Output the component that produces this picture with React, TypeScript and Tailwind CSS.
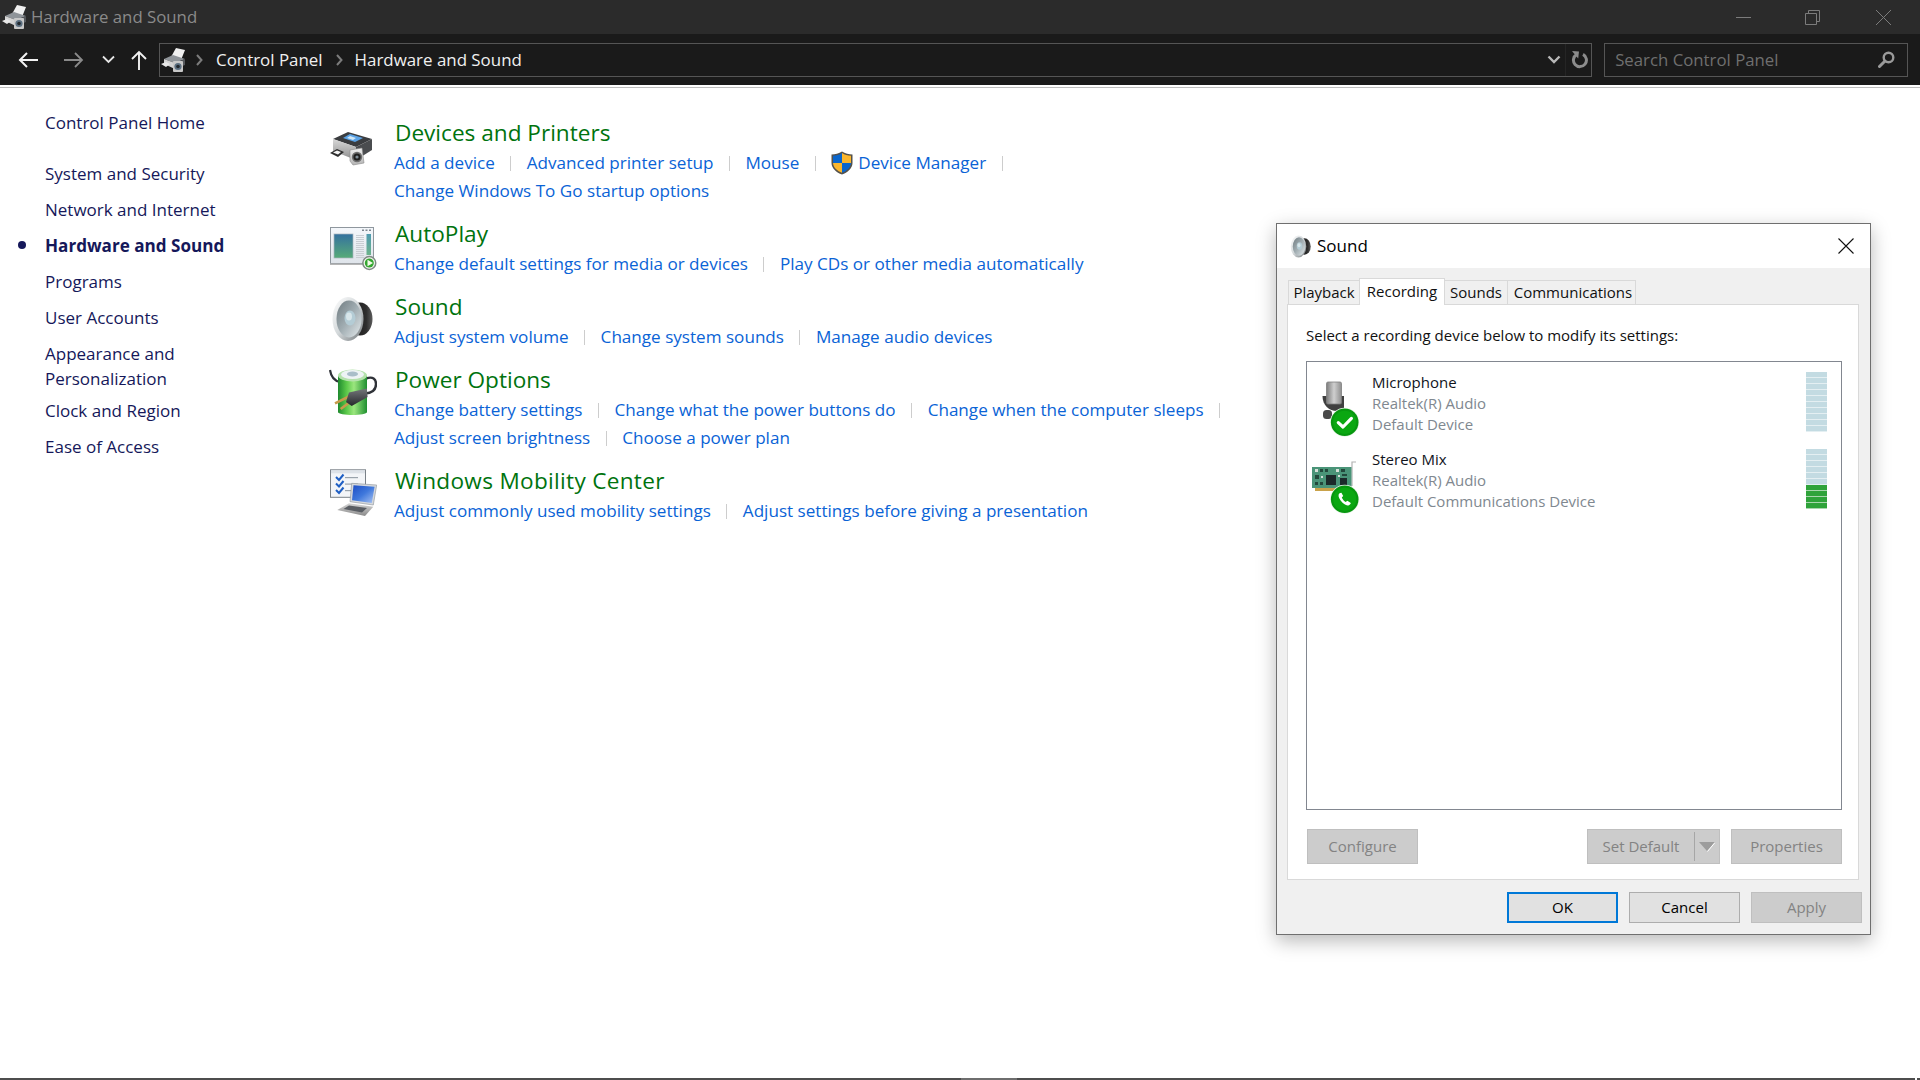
import React from 'react';

const SIDE_ITEMS = ['System and Security', 'Network and Internet', 'Hardware and Sound', 'Programs', 'User Accounts'];

function Grad({ id, stops, x2 = 0, y2 = 1 }: { id: string; stops: [string, string][]; x2?: number; y2?: number }) {
  return (
    <linearGradient id={id} x1="0" y1="0" x2={x2} y2={y2}>
      {stops.map(([o, c]) => (
        <stop key={o} offset={o} stopColor={c} />
      ))}
    </linearGradient>
  );
}

function DevicesIcon() {
  return (
    <svg width="48" height="48" viewBox="0 0 48 48" className="shrink-0 mt-[7px]">
      <defs>
        <Grad id="devFront" stops={[['0', '#d8d8d8'], ['1', '#8d8d8d']]} />
        <Grad id="devCam" stops={[['0', '#f2f2f2'], ['1', '#b4b4b4']]} />
      </defs>
      <polygon points="4,15 19,8 43,15 27,23" fill="#3b3d40" />
      <polygon points="14,14 21,10 34,14 26,18" fill="#5ba3e6" />
      <polygon points="18,14 21,12 27,14 24,16" fill="#cfe6f5" />
      <polygon points="4,15 27,23 27,36 4,27" fill="url(#devFront)" />
      <polygon points="27,23 43,15 43,26 27,36" fill="#4a4c4f" />
      <polygon points="1,29 8,25 15,28 9,33" fill="#2e2e2e" />
      <polygon points="4,28.5 8,26.5 12,28 9,30.5" fill="#f4f4f4" />
      <polygon points="21,26 33,24 35,39 24,41 21,37" fill="url(#devCam)" stroke="#8a8a8a" strokeWidth="0.6" />
      <circle cx="28" cy="33" r="5.2" fill="#6d6d6d" />
      <circle cx="28" cy="33" r="3.6" fill="#1f1f1f" />
      <circle cx="28" cy="33" r="1.6" fill="#7f8d96" />
    </svg>
  );
}

function AutoPlayIcon() {
  return (
    <svg width="48" height="48" viewBox="0 0 48 48" className="shrink-0 mt-[6px]">
      <defs>
        <Grad id="apFrame" stops={[['0', '#f4f7fb'], ['1', '#dfe4ea']]} />
        <Grad id="apPane" stops={[['0', '#34719f'], ['1', '#57ab78']]} />
        <Grad id="apBar" stops={[['0', '#4f9ab0'], ['1', '#6cb38b']]} />
      </defs>
      <rect x="1.5" y="3.5" width="43" height="36" fill="url(#apFrame)" stroke="#8f979e" />
      <rect x="1" y="39.5" width="44" height="1.5" fill="#b5b5b5" />
      <rect x="5" y="10" width="19" height="24" fill="url(#apPane)" stroke="#a9b5bd" strokeWidth="0.7" />
      {[11, 13, 15, 17, 19, 21, 23, 25, 27, 29, 31, 33].map((y) => (
        <rect key={y} x="27" y={y} width="8" height="1" fill="#c9ced3" />
      ))}
      <rect x="37.5" y="10" width="4.5" height="21" fill="url(#apBar)" />
      <rect x="33" y="5.5" width="2" height="1.5" fill="#7e8790" />
      <rect x="36.5" y="5.5" width="2" height="1.5" fill="#7e8790" />
      <rect x="40" y="5.5" width="2" height="1.5" fill="#7e8790" />
      <circle cx="40.3" cy="39" r="7.2" fill="#7f8a84" />
      <circle cx="40.3" cy="39" r="5.7" fill="#f5f7f2" />
      <circle cx="40.3" cy="39" r="4.5" fill="#33a62f" />
      <polygon points="38.5,35.8 44,39 38.5,42.2" fill="#f4fbe9" />
    </svg>
  );
}

function SpeakerIcon({ size = 48, className = '' }: { size?: number; className?: string }) {
  return (
    <svg width={size} height={size} viewBox="0 0 48 48" className={`shrink-0 ${className}`}>
      <defs>
        <Grad id="spBack" stops={[['0', '#111111'], ['0.75', '#2e2e2e'], ['1', '#5c5c5c']]} x2={1} y2={0} />
        <Grad id="spRim" stops={[['0', '#ffffff'], ['0.5', '#d3d8da'], ['1', '#6f7578']]} x2={1} y2={1} />
        <Grad id="spCone" stops={[['0', '#6f7b80'], ['0.5', '#a2aeb3'], ['1', '#e4eaec']]} x2={1} y2={1} />
      </defs>
      <ellipse cx="31" cy="25" rx="12.5" ry="16.5" fill="url(#spBack)" />
      <ellipse cx="19" cy="25" rx="15.5" ry="22" fill="url(#spRim)" />
      <ellipse cx="20" cy="25" rx="12.5" ry="18.5" fill="url(#spCone)" />
      <ellipse cx="21" cy="24" rx="5.5" ry="7.5" fill="#b4ccd5" />
      <ellipse cx="20" cy="22.5" rx="3" ry="4" fill="#d8e6ea" />
    </svg>
  );
}

function PowerIcon() {
  return (
    <svg width="48" height="52" viewBox="0 0 48 52" className="shrink-0 mt-[2px]">
      <defs>
        <Grad id="pwBody" stops={[['0', '#1f8a2e'], ['0.3', '#5cc94a'], ['0.55', '#9be67e'], ['1', '#1f8f30']]} x2={1} y2={0} />
        <Grad id="pwPlug" stops={[['0', '#74777b'], ['1', '#26282b']]} />
      </defs>
      <path d="M1 4 C2 11 6 15 11 16" fill="none" stroke="#2f3238" strokeWidth="2.2" />
      <path d="M37 12.5 C44 10 47 13 47 18 C47 24 43 27 36 27.5" fill="none" stroke="#2f3238" strokeWidth="2.4" />
      <path d="M9 10 L9 46 C9 50 38 50 38 46 L38 10 Z" fill="url(#pwBody)" />
      <ellipse cx="23.5" cy="9.5" rx="14.5" ry="6" fill="#b5e2ac" />
      <ellipse cx="23.5" cy="8.5" rx="11.5" ry="4.6" fill="#eef3f5" />
      <ellipse cx="23.5" cy="8" rx="5.5" ry="2.6" fill="#a9bec9" />
      <path d="M20 30.5 L6 37.3" stroke="#c79a4b" strokeWidth="2.6" />
      <path d="M21 36 L11.7 43" stroke="#c79a4b" strokeWidth="2.6" />
      <polygon points="20,26.5 37.7,22.5 38.6,31 22.7,40 17,36" fill="url(#pwPlug)" />
    </svg>
  );
}

function MobilityIcon() {
  return (
    <svg width="48" height="52" viewBox="0 0 48 52" className="shrink-0 mt-[2px]">
      <defs>
        <Grad id="mbScreen" stops={[['0', '#1c4cc4'], ['0.5', '#3f78dc'], ['1', '#a9c3f2']]} x2={1} y2={1} />
        <Grad id="mbBase" stops={[['0', '#d6d6d6'], ['1', '#8a8a8a']]} />
      </defs>
      <rect x="1.5" y="2.8" width="35" height="27.5" fill="#f3f5f8" stroke="#7a8188" />
      <rect x="2" y="3.3" width="34" height="3" fill="#dde2e8" />
      {[11.5, 18, 24.5].map((y) => (
        <g key={y}>
          <path d={`M7 ${y - 1.5} L10 ${y + 1.5} L14.5 ${y - 4}`} fill="none" stroke="#1f5fc4" strokeWidth="2" />
          <rect x="16" y={y - 1.5} width="13" height="1.2" fill="#9aa3ac" />
        </g>
      ))}
      <polygon points="22.7,16.3 47.7,18 44.3,38 21,34.7" fill="#d5d8dc" stroke="#8c9298" strokeWidth="0.6" />
      <polygon points="24.5,18.3 45.6,19.8 42.8,36 23,33.2" fill="url(#mbScreen)" />
      <polygon points="20,36.3 44.3,39.7 36,49 8.3,43" fill="url(#mbBase)" />
      <polygon points="20,38.5 38,41 33,45.5 14.5,42" fill="#5a5e64" />
    </svg>
  );
}

function Shield() {
  return (
    <svg width="22" height="24" viewBox="0 0 22 24" className="shrink-0 mr-[5px]">
      <path d="M11 .5 C14 2.6 18 3.4 21.5 3.4 L21.5 12 C21.5 17.5 16.5 21.5 11 23.5 C5.5 21.5 .5 17.5 .5 12 L.5 3.4 C4 3.4 8 2.6 11 .5 Z" fill="#55524c" />
      <path d="M11 2 L11 12 L2 12 L2 4.8 C5.4 4.6 8.4 3.8 11 2 Z" fill="#0a66cc" />
      <path d="M11 2 C13.6 3.8 16.6 4.6 20 4.8 L20 12 L11 12 Z" fill="#fbb62c" />
      <path d="M2 12 L11 12 L11 21.8 C6.2 20 2.4 16.6 2 12 Z" fill="#fbb62c" />
      <path d="M11 12 L20 12 C19.6 16.6 15.8 20 11 21.8 Z" fill="#0a66cc" />
    </svg>
  );
}

function SmallDevices() {
  return (
    <svg width="25" height="24" viewBox="0 0 25 24" className="shrink-0">
      <polygon points="10,9 15,0 24,2 20,12" fill="#f0f0f0" />
      <polygon points="3,11 12,7 24,11 14,15" fill="#8f9499" />
      <polygon points="3,11 14,15 14,21 3,16" fill="#d3d3d3" />
      <polygon points="14,15 24,11 24,17 14,21" fill="#55585c" />
      <polygon points="0,16 5,14 9,16 5,19" fill="#e8e8e8" />
      <rect x="12" y="13" width="10" height="11" rx="1" fill="#c7c7c7" />
      <circle cx="17" cy="18.5" r="3.6" fill="#5b6f80" />
      <circle cx="17" cy="18.5" r="1.8" fill="#22282e" />
    </svg>
  );
}

function Badge({ children }: { children: React.ReactNode }) {
  return (
    <g>
      <circle cx="32.7" cy="50.3" r="14.6" fill="#eef5ee" />
      <circle cx="32.7" cy="50.3" r="13.8" fill="#07970f" />
      <circle cx="32.7" cy="50.3" r="11.6" fill="#0aa711" />
      {children}
    </g>
  );
}

function MicIcon() {
  return (
    <svg width="60" height="66" viewBox="0 0 60 66" className="shrink-0">
      <defs>
        <Grad id="micHead" stops={[['0', '#7c7c7c'], ['0.5', '#cfcfcf'], ['1', '#8e8e8e']]} x2={1} y2={0} />
      </defs>
      <path d="M10.5 24 C10.5 33 17 39 25 39 L32 37 L32 24 Z" fill="#3f3f3f" />
      <rect x="14.5" y="10" width="15" height="22" rx="1.5" fill="url(#micHead)" stroke="#7d7d7d" strokeWidth="0.8" />
      <rect x="11" y="38" width="9" height="9" rx="3.5" fill="#4a4a4a" />
      <Badge>
        <path d="M26.3 50.6 L31 55 L39.4 46.4" fill="none" stroke="#fff" strokeWidth="3.2" strokeLinecap="round" strokeLinejoin="round" />
      </Badge>
    </svg>
  );
}

function CardIcon() {
  const chips = [
    [3, 20, 3, 3], [8, 20, 3, 3], [13, 20, 3, 3], [24, 20, 3, 3], [29, 20, 4, 3],
    [3, 26, 4, 4], [9, 27, 2, 2], [3, 33, 3, 3], [8, 33, 3, 3], [26, 26, 2, 2], [30, 25, 5, 2],
  ];
  return (
    <svg width="60" height="66" viewBox="0 0 60 66" className="shrink-0">
      <path d="M40 37 L40 13 L44 13" fill="none" stroke="#b2b2b2" strokeWidth="1.2" />
      <rect x="0" y="18" width="39.5" height="21" fill="#4a9478" />
      <rect x="3" y="39" width="30" height="3" fill="#c9a24a" />
      {chips.map(([x, y, w, h], i) => (
        <rect key={i} x={x} y={y} width={w} height={h} fill={i % 3 === 0 ? '#d5dfd8' : '#23493c'} />
      ))}
      <rect x="14" y="26" width="10" height="10" fill="#1c2a2a" />
      <rect x="28" y="29" width="7" height="7" fill="#1c2a2a" />
      <Badge>
        <path d="M27.2 44.6 C26 46 26.4 48.6 28.6 51.6 C31 55 34.4 57 36.4 56.4 C37.8 56 38.8 54.8 38.8 54 L35.4 51.8 L33.6 53 C32.4 52.4 30.4 50 29.8 48.4 L31.2 47 L29.4 43.8 C28.6 43.8 27.8 44 27.2 44.6 Z" fill="#fff" />
      </Badge>
    </svg>
  );
}

function Sep() {
  return <span className="mx-[15.5px] h-[15px] w-px bg-[#cdcdcd]" />;
}

function LinkRow({ links }: { links: (string | { label: string; shield: boolean })[] }) {
  return (
    <div className="-ml-px flex h-[28px] items-center whitespace-nowrap text-[17.1px] text-[#0a63d6]">
      {links.map((l, i) => {
        if (l === '|') return <Sep key={i} />;
        if (typeof l === 'string') return <span key={i}>{l}</span>;
        return (
          <span key={i} className="flex items-center">
            <Shield />
            {l.label}
          </span>
        );
      })}
    </div>
  );
}

function Section({
  icon,
  title,
  titleClass = '',
  rows,
}: {
  icon: React.ReactNode;
  title: string;
  titleClass?: string;
  rows: (string | { label: string; shield: boolean })[][];
}) {
  return (
    <div className="flex mb-[13px]">
      <div className="w-[66px] flex">{icon}</div>
      <div>
        <div className={`h-[32px] leading-[32px] text-[22.6px] text-[#00730e] whitespace-nowrap ${titleClass}`}>{title}</div>
        {rows.map((r, i) => (
          <LinkRow key={i} links={r} />
        ))}
      </div>
    </div>
  );
}

function SideRow({ label, active }: { label: string; active?: boolean }) {
  return (
    <div className="flex h-[36px] items-center text-[#15185a]">
      <div className="w-[45px] flex">
        {active && <span className="ml-[18px] -mt-[2px] h-[8px] w-[8px] rounded-full bg-[#15185a]" />}
      </div>
      <span className={active ? 'font-bold text-[17.1px]' : 'text-[17px]'}>{label}</span>
    </div>
  );
}

function Level({ green }: { green: number }) {
  const cells = Array.from({ length: 10 }, (_, i) => i);
  return (
    <div className="ml-auto w-[21px] shrink-0">
      {cells.map((i) => (
        <div key={i} className={i >= 10 - green ? 'h-[6px] bg-[#a9d6ad]' : 'h-[6px] bg-[#e4eff2]'}>
          <div className={i >= 10 - green ? 'h-[4.6px] bg-[#2fa33a]' : 'h-[4.6px] bg-[#c3dbe2]'} />
        </div>
      ))}
    </div>
  );
}

function Device({ icon, name, line2, line3, green }: { icon: React.ReactNode; name: string; line2: string; line3: string; green: number }) {
  return (
    <div className="flex h-[77px] pl-[5px] pr-[14px]">
      {icon}
      <div className="text-[15px] leading-[21px] text-[#808890]">
        <div className="text-[#10141c]">{name}</div>
        <div>{line2}</div>
        <div>{line3}</div>
      </div>
      <Level green={green} />
    </div>
  );
}

function DisabledBtn({ label, className }: { label: string; className: string }) {
  return (
    <div className={`flex items-center justify-center border border-[#bfbfbf] bg-[#cccccc] text-[15px] text-[#838383] ${className}`}>
      {label}
    </div>
  );
}

function SoundDialog() {
  return (
    <div className="absolute left-[1276px] top-[223px] flex w-[595px] h-[712px] flex-col border border-[#6f6f6f] bg-[#f0f0f0] shadow-[0_6px_18px_rgba(0,0,0,0.28)]">
      <div className="flex h-[44px] items-center bg-white pl-[12px] pr-[16px]">
        <SpeakerIcon size={24} className="mr-[4px]" />
        <span className="text-[17px] text-black">Sound</span>
        <svg width="16" height="16" viewBox="0 0 16 16" className="ml-auto">
          <path d="M.5 .5 L15.5 15.5 M15.5 .5 L.5 15.5" stroke="#111" strokeWidth="1.1" />
        </svg>
      </div>
      <div className="ml-[10px] mr-[11px] mt-[10px]">
        <div className="relative z-10 flex h-[26px] items-end pl-[1px] text-[15px] text-[#111]">
          <div className="flex h-[24px] w-[71px] items-center justify-center border-l border-t border-[#d9d9d9] bg-[#f0f0f0]">Playback</div>
          <div className="-mb-px flex h-[27px] w-[86px] items-start justify-center border-x border-t border-[#d9d9d9] bg-white pt-[1px]">Recording</div>
          <div className="flex h-[24px] w-[62px] items-center justify-center border-t border-[#d9d9d9] bg-[#f0f0f0]">Sounds</div>
          <div className="flex h-[24px] w-[129px] items-center justify-center border-x border-t border-[#d9d9d9] bg-[#f0f0f0] pl-[3px]">Communications</div>
        </div>
        <div className="h-[576px] border border-[#d9d9d9] bg-white pl-[18px] pr-[16px] pt-[20px]">
          <div className="h-[21px] text-[15px] leading-[21px] text-[#111]">Select a recording device below to modify its settings:</div>
          <div className="mt-[15px] h-[449px] border border-[#828790] pt-[10px]">
            <Device icon={<MicIcon />} name="Microphone" line2="Realtek(R) Audio" line3="Default Device" green={0} />
            <Device icon={<CardIcon />} name="Stereo Mix" line2="Realtek(R) Audio" line3="Default Communications Device" green={4} />
          </div>
          <div className="mt-[19px] flex pl-px">
            <DisabledBtn label="Configure" className="h-[35px] w-[111px]" />
            <div className="ml-auto flex h-[35px] w-[133px] items-center border border-[#bfbfbf] bg-[#cccccc] text-[15px] text-[#838383]">
              <span className="w-[106px] text-center">Set Default</span>
              <span className="h-[29px] w-px bg-[#a6a6a6]" />
              <svg width="16" height="10" viewBox="0 0 16 10" className="ml-[4px]">
                <polygon points="0,0 16,0 8,9" fill="#9c9c9c" />
                <path d="M16 .5 L8.5 9.5" stroke="#fff" strokeWidth="1" />
              </svg>
            </div>
            <DisabledBtn label="Properties" className="ml-[11px] h-[35px] w-[111px]" />
          </div>
        </div>
      </div>
      <div className="mt-[12px] flex justify-end gap-[11px] pr-[8px] text-[15px]">
        <div className="flex h-[31px] w-[111px] items-center justify-center border-2 border-[#0078d7] bg-[#e1e1e1] text-black">OK</div>
        <div className="flex h-[31px] w-[111px] items-center justify-center border border-[#adadad] bg-[#e1e1e1] text-black">Cancel</div>
        <DisabledBtn label="Apply" className="h-[31px] w-[111px]" />
      </div>
    </div>
  );
}

export default function App() {
  return (
    <div className="relative flex h-[1080px] w-[1920px] flex-col overflow-hidden bg-white font-['Open_Sans',sans-serif]">
      {/* Title bar */}
      <div className="flex h-[34px] items-center bg-[#2b2b2b] pl-[2px]">
        <SmallDevices />
        <span className="ml-[4px] text-[16.8px] text-[#8a8a8a]">Hardware and Sound</span>
        <div className="ml-auto flex items-center">
          <svg width="15" height="15" viewBox="0 0 15 15" className="mr-[54px]">
            <path d="M0 7.5 H15" stroke="#7c7c7c" />
          </svg>
          <svg width="15" height="15" viewBox="0 0 15 15" className="mr-[56px]">
            <path d="M.5 3.5 H11.5 V14.5 H.5 Z M3.5 3 V.5 H14.5 V11.5 H12" fill="none" stroke="#7c7c7c" />
          </svg>
          <svg width="15" height="15" viewBox="0 0 15 15" className="mr-[29px]">
            <path d="M0 0 L15 15 M15 0 L0 15" stroke="#7c7c7c" />
          </svg>
        </div>
      </div>

      {/* Address bar */}
      <div className="flex h-[51px] items-center bg-[#1a1a1a] pl-[18px] pr-[12px]">
        <svg width="20" height="18" viewBox="0 0 20 18" className="shrink-0">
          <path d="M20 9 H2 M9 2 L2 9 L9 16" fill="none" stroke="#f2f2f2" strokeWidth="2" />
        </svg>
        <svg width="20" height="18" viewBox="0 0 20 18" className="ml-[26px] shrink-0">
          <path d="M0 9 H18 M11 2 L18 9 L11 16" fill="none" stroke="#8a8a8a" strokeWidth="1.8" />
        </svg>
        <svg width="13" height="9" viewBox="0 0 13 9" className="ml-[18px] shrink-0">
          <path d="M1 1.5 L6.5 7 L12 1.5" fill="none" stroke="#e6e6e6" strokeWidth="1.8" />
        </svg>
        <svg width="16" height="20" viewBox="0 0 16 20" className="ml-[16px] shrink-0">
          <path d="M8 20 V2 M1 9 L8 2 L15 9" fill="none" stroke="#f2f2f2" strokeWidth="1.9" />
        </svg>
        <div className="ml-[12px] flex h-[34px] w-[1434px] items-center border border-[#555] pl-[1px] text-[16.9px] text-[#f0f0f0]">
          <SmallDevices />
          <svg width="7" height="12" viewBox="0 0 7 12" className="ml-[10px]">
            <path d="M1 1 L5.5 6 L1 11" fill="none" stroke="#7c7c7c" strokeWidth="2" />
          </svg>
          <span className="ml-[13px]">Control Panel</span>
          <svg width="7" height="12" viewBox="0 0 7 12" className="ml-[13px]">
            <path d="M1 1 L5.5 6 L1 11" fill="none" stroke="#7c7c7c" strokeWidth="2" />
          </svg>
          <span className="ml-[12px]">Hardware and Sound</span>
          <svg width="14" height="9" viewBox="0 0 14 9" className="ml-auto mr-[4px]">
            <path d="M1.5 1.5 L7 7 L12.5 1.5" fill="none" stroke="#b8b8b8" strokeWidth="2.4" />
          </svg>
          <span className="h-[32px] w-px bg-[#252525] mr-[5px]" />
          <svg width="17" height="18" viewBox="0 0 17 18" className="mr-[3px]">
            <path d="M5.5 3.6 A6.5 6.5 0 1 0 12 3.4" fill="none" stroke="#8c8c8c" strokeWidth="3" />
            <polygon points="1,0 8,0.4 7.2,7.4" fill="#8c8c8c" />
          </svg>
        </div>
        <div className="ml-[12px] flex h-[34px] w-[304px] items-center border border-[#555] pl-[10px] pr-[12px] text-[16.8px] text-[#6f6f6f]">
          Search Control Panel
          <svg width="17" height="17" viewBox="0 0 17 17" className="ml-auto">
            <circle cx="10.5" cy="6.5" r="4.8" fill="none" stroke="#9a9a9a" strokeWidth="2.4" />
            <path d="M7 10 L1.5 15.5" stroke="#9a9a9a" strokeWidth="3" strokeLinecap="round" />
          </svg>
        </div>
      </div>
      <div className="h-[3px] border-b border-[#bdbdbd] bg-white" />

      {/* Main area */}
      <div className="flex flex-1">
        <div className="w-[329px] shrink-0 pt-[17px]">
          <SideRow label="Control Panel Home" />
          <div className="h-[15px]" />
          {SIDE_ITEMS.map((s) => (
            <SideRow key={s} label={s} active={s === 'Hardware and Sound'} />
          ))}
          <div className="pl-[45px] pt-[5px] pb-[2px] text-[17px] leading-[25px] text-[#15185a]">
            Appearance and
            <br />
            Personalization
          </div>
          <SideRow label="Clock and Region" />
          <SideRow label="Ease of Access" />
        </div>
        <div className="pt-[29px]">
          <Section
            icon={<DevicesIcon />}
            title="Devices and Printers"
            rows={[
              ['Add a device', '|', 'Advanced printer setup', '|', 'Mouse', '|', { label: 'Device Manager', shield: true }, '|'],
              ['Change Windows To Go startup options'],
            ]}
          />
          <Section
            icon={<AutoPlayIcon />}
            title="AutoPlay"
            rows={[['Change default settings for media or devices', '|', 'Play CDs or other media automatically']]}
          />
          <Section
            icon={<SpeakerIcon className="mt-[3px]" />}
            title="Sound"
            rows={[['Adjust system volume', '|', 'Change system sounds', '|', 'Manage audio devices']]}
          />
          <Section
            icon={<PowerIcon />}
            title="Power Options"
            rows={[
              ['Change battery settings', '|', 'Change what the power buttons do', '|', 'Change when the computer sleeps', '|'],
              ['Adjust screen brightness', '|', 'Choose a power plan'],
            ]}
          />
          <Section
            icon={<MobilityIcon />}
            title="Windows Mobility Center"
            titleClass="tracking-[0.3px]"
            rows={[['Adjust commonly used mobility settings', '|', 'Adjust settings before giving a presentation']]}
          />
        </div>
      </div>

      {/* Bottom scrollbar strip */}
      <div className="flex h-[2px] bg-[#4d4d4d]">
        <div className="ml-[961px] w-[56px] bg-[#6e6e6e]" />
        <div className="ml-auto mr-[3px] w-[2px] bg-white" />
      </div>

      <SoundDialog />
    </div>
  );
}
